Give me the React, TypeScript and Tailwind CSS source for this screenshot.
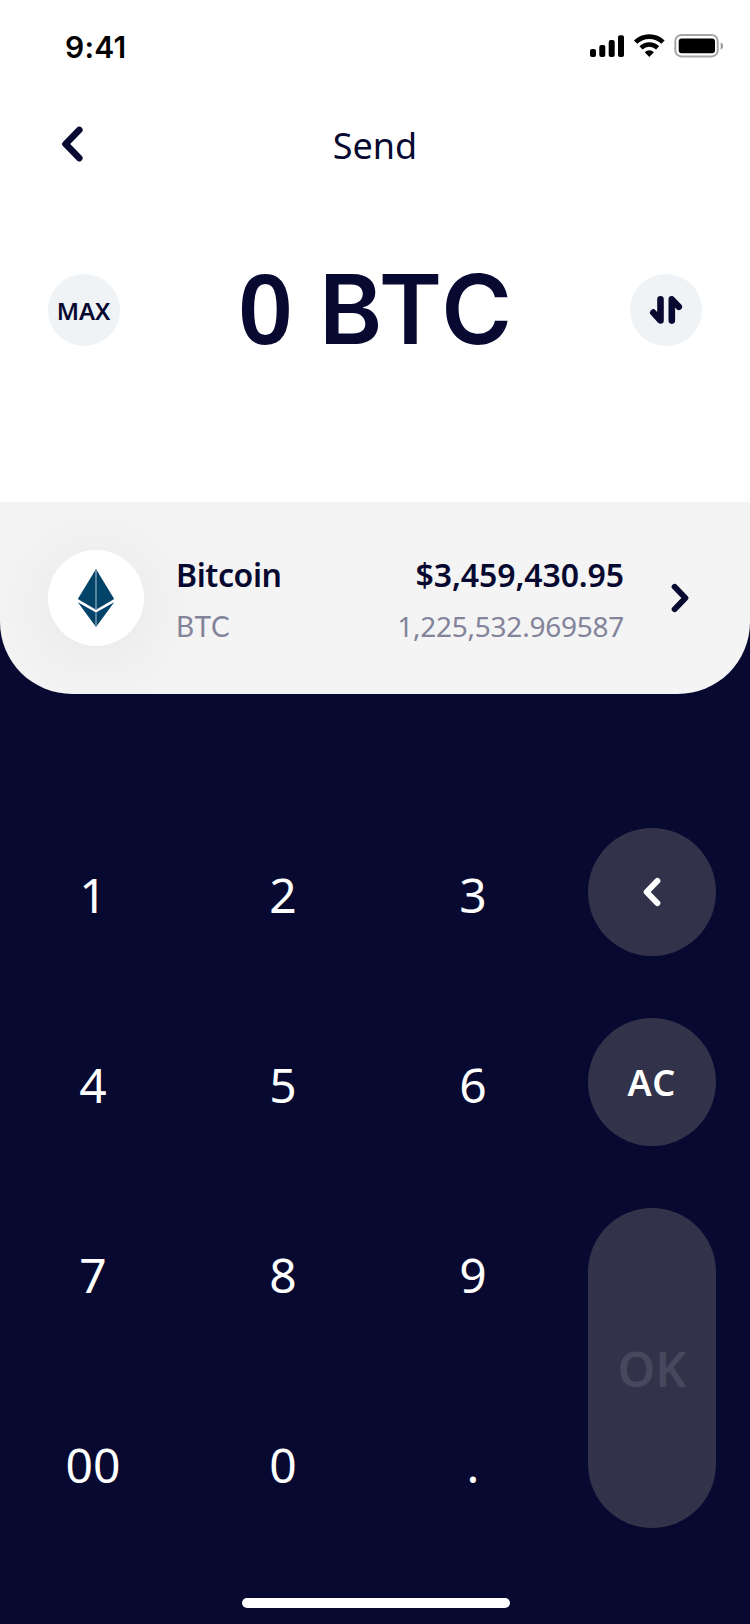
import type { ReactNode } from "react";

const keys = ["1", "2", "3", "4", "5", "6", "7", "8", "9", "00", "0", "."];

function StatusIcons() {
  return (
    <svg width="136" height="26" viewBox="588 33 136 26" className="block">
      <rect x="590" y="49" width="6" height="8" rx="2" />
      <rect x="599.3" y="45" width="6" height="12" rx="2" />
      <rect x="608.7" y="40" width="6" height="17" rx="2" />
      <rect x="618" y="35.3" width="6" height="21.7" rx="2" />
      <path d="M635.6 42.2a19.5 19.5 0 0 1 27.4 0" fill="none" stroke="#000" strokeWidth="4.7" />
      <path d="M641 47.9a12 12 0 0 1 16.6 0" fill="none" stroke="#000" strokeWidth="4.4" />
      <path d="M644.7 52.2a6.6 6.6 0 0 1 9.2 0L649.3 57z" />
      <rect x="675.3" y="35" width="42.4" height="21.4" rx="6" fill="none" stroke="#000" strokeOpacity=".35" strokeWidth="2" />
      <rect x="678.7" y="38.4" width="36.3" height="14.9" rx="3" />
      <path d="M720.7 42.2v7.8a4.3 4.3 0 0 0 0-7.8z" fillOpacity=".4" />
    </svg>
  );
}

function Chevron({ d, w, h, stroke }: { d: string; w: number; h: number; stroke: number }) {
  return (
    <svg width={w} height={h} viewBox={`0 0 ${w} ${h}`} className="block">
      <path d={d} fill="none" stroke="currentColor" strokeWidth={stroke} strokeLinecap="round" strokeLinejoin="round" />
    </svg>
  );
}

function SwapIcon() {
  return (
    <svg width="34" height="30" viewBox="0 0 34 30" className="block">
      <g fill="none" stroke="currentColor" strokeWidth="6.6" strokeLinecap="round" strokeLinejoin="round">
        <path d="M11.5 4.4v21.1L4.3 17.6" />
        <path d="M22.8 25.6V4.4l7 7.4" />
      </g>
    </svg>
  );
}

function EthLogo() {
  return (
    <svg width="38" height="60" viewBox="0 0 38 60" className="block">
      <path d="M19 1L.8 31 19 41.7 37.2 31z" fill="#02436a" />
      <path d="M.8 34.2L19 59l18.2-24.8L19 44.6z" fill="#02436a" />
      <path d="M19 1v40.7M19 44.6V59" stroke="#80a1b4" strokeWidth="1.4" />
    </svg>
  );
}

function RoundKey({ children, className = "" }: { children: ReactNode; className?: string }) {
  return (
    <button className={`flex w-32 items-center justify-center rounded-full bg-[#32324a] ${className}`}>
      {children}
    </button>
  );
}

export default function App() {
  return (
    <div className="flex h-[1624px] w-[750px] flex-col overflow-hidden bg-[#070930] font-['Noto_Sans',sans-serif] text-[#070930]">
      <div className="flex h-[502px] flex-col bg-white">
        <header className="flex h-[92px] items-start justify-between pt-[33px] pr-[26px] pl-[65px] text-black">
          <span className="font-[Inter,sans-serif] text-[30px] leading-[28px] font-semibold tracking-[0.2px]">9:41</span>
          <StatusIcons />
        </header>
        <nav className="grid h-[104px] grid-cols-[150px_1fr_150px] items-center">
          <button className="pl-[62px]">
            <Chevron w={21} h={36} d="M17.2 4L3.6 18l13.6 14" stroke={6.8} />
          </button>
          <h1 className="pt-[3px] text-center text-[36px] leading-[40px]">Send</h1>
        </nav>
        <section className="flex h-[228px] items-center justify-between px-12">
          <button className="flex size-[72px] items-center justify-center rounded-full bg-[#eff3f6] pt-[1px] pr-[1px] text-[24px] font-semibold">
            MAX
          </button>
          <p className="flex items-baseline pb-1 text-[96px] leading-[100px] font-semibold">
            <span>0</span>
            <span className="mr-[-2px] ml-[26px] font-[Inter,sans-serif] tracking-[2px]">BTC</span>
          </p>
          <button className="flex size-[72px] items-center justify-center rounded-full bg-[#eff3f6]">
            <SwapIcon />
          </button>
        </section>
      </div>

      <section className="flex h-48 shrink-0 items-center overflow-hidden rounded-b-[72px] bg-[#f4f4f4] px-12">
        <div className="flex size-24 items-center justify-center rounded-full bg-white shadow-[0_8px_80px_rgba(0,0,0,0.08)]">
          <EthLogo />
        </div>
        <div className="ml-8 flex flex-col gap-[3px] pt-[5px]">
          <span className="text-[32px] leading-[48px] font-semibold tracking-[-0.4px]">Bitcoin</span>
          <span className="font-[Lato,sans-serif] text-[28px] leading-[48px] tracking-[0.8px] text-[#83839a]">BTC</span>
        </div>
        <div className="ml-auto flex flex-col items-end gap-[3px] pt-[5px]">
          <span className="text-[32px] leading-[48px] font-semibold tracking-[-0.1px]">$3,459,430.95</span>
          <span className="text-[28px] leading-[48px] tracking-[-0.25px] text-[#83839a]">1,225,532.969587</span>
        </div>
        <button className="mr-[13px] ml-[47px]">
          <Chevron w={18} h={30} d="M3.6 3.8L14.4 15 3.6 26.2" stroke={5.9} />
        </button>
      </section>

      <main className="mt-[134px] flex items-start pl-[29px] text-white">
        <div className="grid grid-cols-[128px_128px_128px] grid-rows-[128px_128px_128px_128px] gap-[62px]">
          {keys.map((key) => (
            <button key={key} className="flex items-center justify-center pt-[5px] text-[48px]">
              {key}
            </button>
          ))}
        </div>
        <div className="ml-[51px] flex flex-col gap-[62px]">
          <RoundKey className="h-32">
            <Chevron w={18} h={30} d="M14.4 3.9L3.6 15l10.8 11.1" stroke={5.9} />
          </RoundKey>
          <RoundKey className="h-32 pt-[1px] text-[36px] font-semibold tracking-[1.2px]">AC</RoundKey>
          <RoundKey className="h-80 pt-[1px] text-[48px] font-semibold text-[#48475d]">OK</RoundKey>
        </div>
      </main>
      <div className="mt-[70px] ml-[242px] h-2.5 w-[268px] shrink-0 rounded-full bg-white" />
    </div>
  );
}
